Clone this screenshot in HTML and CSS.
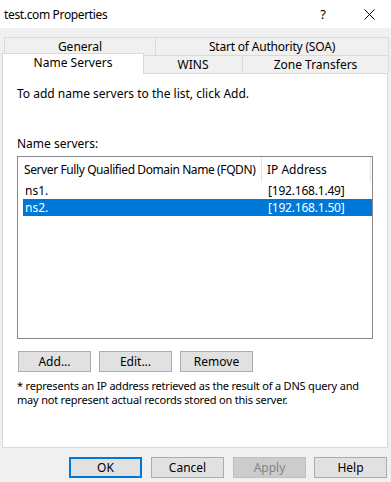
FILE: index.html
```html
<!DOCTYPE html>
<html>
<head>
<meta charset="utf-8">
<link rel="stylesheet" href="styles.css">
</head>
<body>
<div class="dialog">
  <div class="titlebar">
    <span class="title">test.com Properties</span>
    <span class="help-q">?</span>
    <svg class="close" width="11" height="11" viewBox="0 0 11 11"><path d="M0.5 0.5 L10.5 10.5 M10.5 0.5 L0.5 10.5" stroke="#000" stroke-width="1" fill="none"/></svg>
  </div>
  <div class="tabs">
    <div class="tabrow row1">
      <div class="tab t-general">General</div>
      <div class="tab t-soa">Start of Authority (SOA)</div>
    </div>
    <div class="tabrow row2">
      <div class="tab active t-ns">Name Servers</div>
      <div class="tab t-wins">WINS</div>
      <div class="tab t-zone">Zone Transfers</div>
    </div>
  </div>
  <div class="panel">
    <p class="intro">To add name servers to the list, click Add.</p>
    <p class="label">Name servers:</p>
    <div class="listview">
      <div class="lv-header">
        <div class="col col1">Server Fully Qualified Domain Name (FQDN)</div>
        <div class="col col2">IP Address</div>
      </div>
      <div class="lv-row">
        <div class="cell c1">ns1.</div>
        <div class="cell c2">[192.168.1.49]</div>
      </div>
      <div class="lv-row selected">
        <div class="cell c1">ns2.</div>
        <div class="cell c2">[192.168.1.50]</div>
      </div>
    </div>
    <div class="btnrow">
      <button class="btn">Add...</button>
      <button class="btn">Edit...</button>
      <button class="btn">Remove</button>
    </div>
    <p class="note">* represents an IP address retrieved as the result of a DNS query and<br>may not represent actual records stored on this server.</p>
  </div>
  <div class="footer">
    <button class="btn default">OK</button>
    <button class="btn">Cancel</button>
    <button class="btn disabled">Apply</button>
    <button class="btn">Help</button>
  </div>
</div>
</body>
</html>
```
FILE: styles.css
```css
html, body {
  margin: 0;
  padding: 0;
}
body {
  background: #f0f0f0;
  font-family: "Noto Sans", "Open Sans", sans-serif;
  font-size: 12px;
  color: #000;
}
.dialog {
  width: 391px;
  height: 482px;
  overflow: hidden;
}
.titlebar {
  height: 28px;
  background: #fff;
  display: flex;
  align-items: center;
}
.title {
  font-size: 12px;
  letter-spacing: -0.35px;
  margin-left: 4px;
  flex: 1;
}
.help-q {
  font-size: 13px;
  margin-right: 38px;
}
.close {
  margin-right: 16px;
}
.tabs {
  margin-top: 9px;
}
.tabrow {
  display: flex;
}
.row1 {
  margin-left: 4px;
}
.row2 {
  margin-left: 2px;
  align-items: flex-end;
  height: 18px;
  position: relative;
  z-index: 2;
}
.tab {
  box-sizing: border-box;
  height: 18px;
  border: 1px solid #d9d9d9;
  border-bottom: none;
  background: #f0f0f0;
  display: flex;
  align-items: center;
  justify-content: center;
  line-height: 15px;
  white-space: nowrap;
}
.row2 .tab {
  border-top: 1px solid #d9d9d9;
}
.t-general { width: 152px; }
.t-soa { width: 233px; border-left: none; letter-spacing: -0.2px; }
.t-ns {
  width: 142px;
  height: 21px;
  margin-bottom: -1px;
  background: #fff;
  align-items: flex-start;
  padding-top: 1px;
}
.t-wins { width: 99px; border-left: none; }
.t-zone { width: 146px; border-left: none; }
.panel {
  box-sizing: border-box;
  margin-left: 2px;
  width: 386px;
  height: 375px;
  background: #fff;
  border: 1px solid #d9d9d9;
  padding: 12px 0 0 14px;
}
.intro, .label, .note {
  margin: 0;
  line-height: 15px;
  white-space: nowrap;
}
.label {
  margin-top: 35px;
}
.listview {
  box-sizing: border-box;
  margin-top: 5px;
  width: 356px;
  height: 183px;
  border: 1px solid #828790;
}
.lv-header {
  display: flex;
  height: 25px;
  align-items: stretch;
}
.col {
  display: flex;
  align-items: center;
  box-sizing: border-box;
  border-right: 1px solid #e5e5e5;
  padding-left: 6px;
  white-space: nowrap;
  overflow: hidden;
}
.col1 { width: 244px; letter-spacing: -0.4px; }
.col2 { width: 109px; padding-left: 5px; }
.lv-row {
  display: flex;
  height: 17px;
  align-items: center;
  margin-left: 5px;
  width: 349px;
  white-space: nowrap;
}
.lv-row.selected {
  background: #0078d7;
  color: #fff;
}
.cell.c1 { width: 239px; padding-left: 2px; box-sizing: border-box; }
.cell.c2 { padding-left: 6px; letter-spacing: -0.2px; }
.btnrow {
  display: flex;
  gap: 8px;
  margin-top: 12px;
  margin-left: 1px;
}
.btn {
  box-sizing: border-box;
  width: 73px;
  height: 21px;
  background: #e1e1e1;
  border: 1px solid #adadad;
  font-family: "Noto Sans", "Open Sans", sans-serif;
  font-size: 12px;
  color: #000;
  padding: 0;
  line-height: 15px;
}
.note {
  margin-top: 7px;
  font-size: 11px;
  line-height: 14px;
  letter-spacing: -0.2px;
}
.footer {
  display: flex;
  justify-content: flex-end;
  gap: 9px;
  margin-top: 9px;
  padding-right: 4px;
}
.footer .btn:last-child { margin-left: -1px; }
.btn.default {
  border: 2px solid #0078d7;
}
.btn.disabled {
  background: #cccccc;
  border-color: #bfbfbf;
  color: #838383;
}
```
